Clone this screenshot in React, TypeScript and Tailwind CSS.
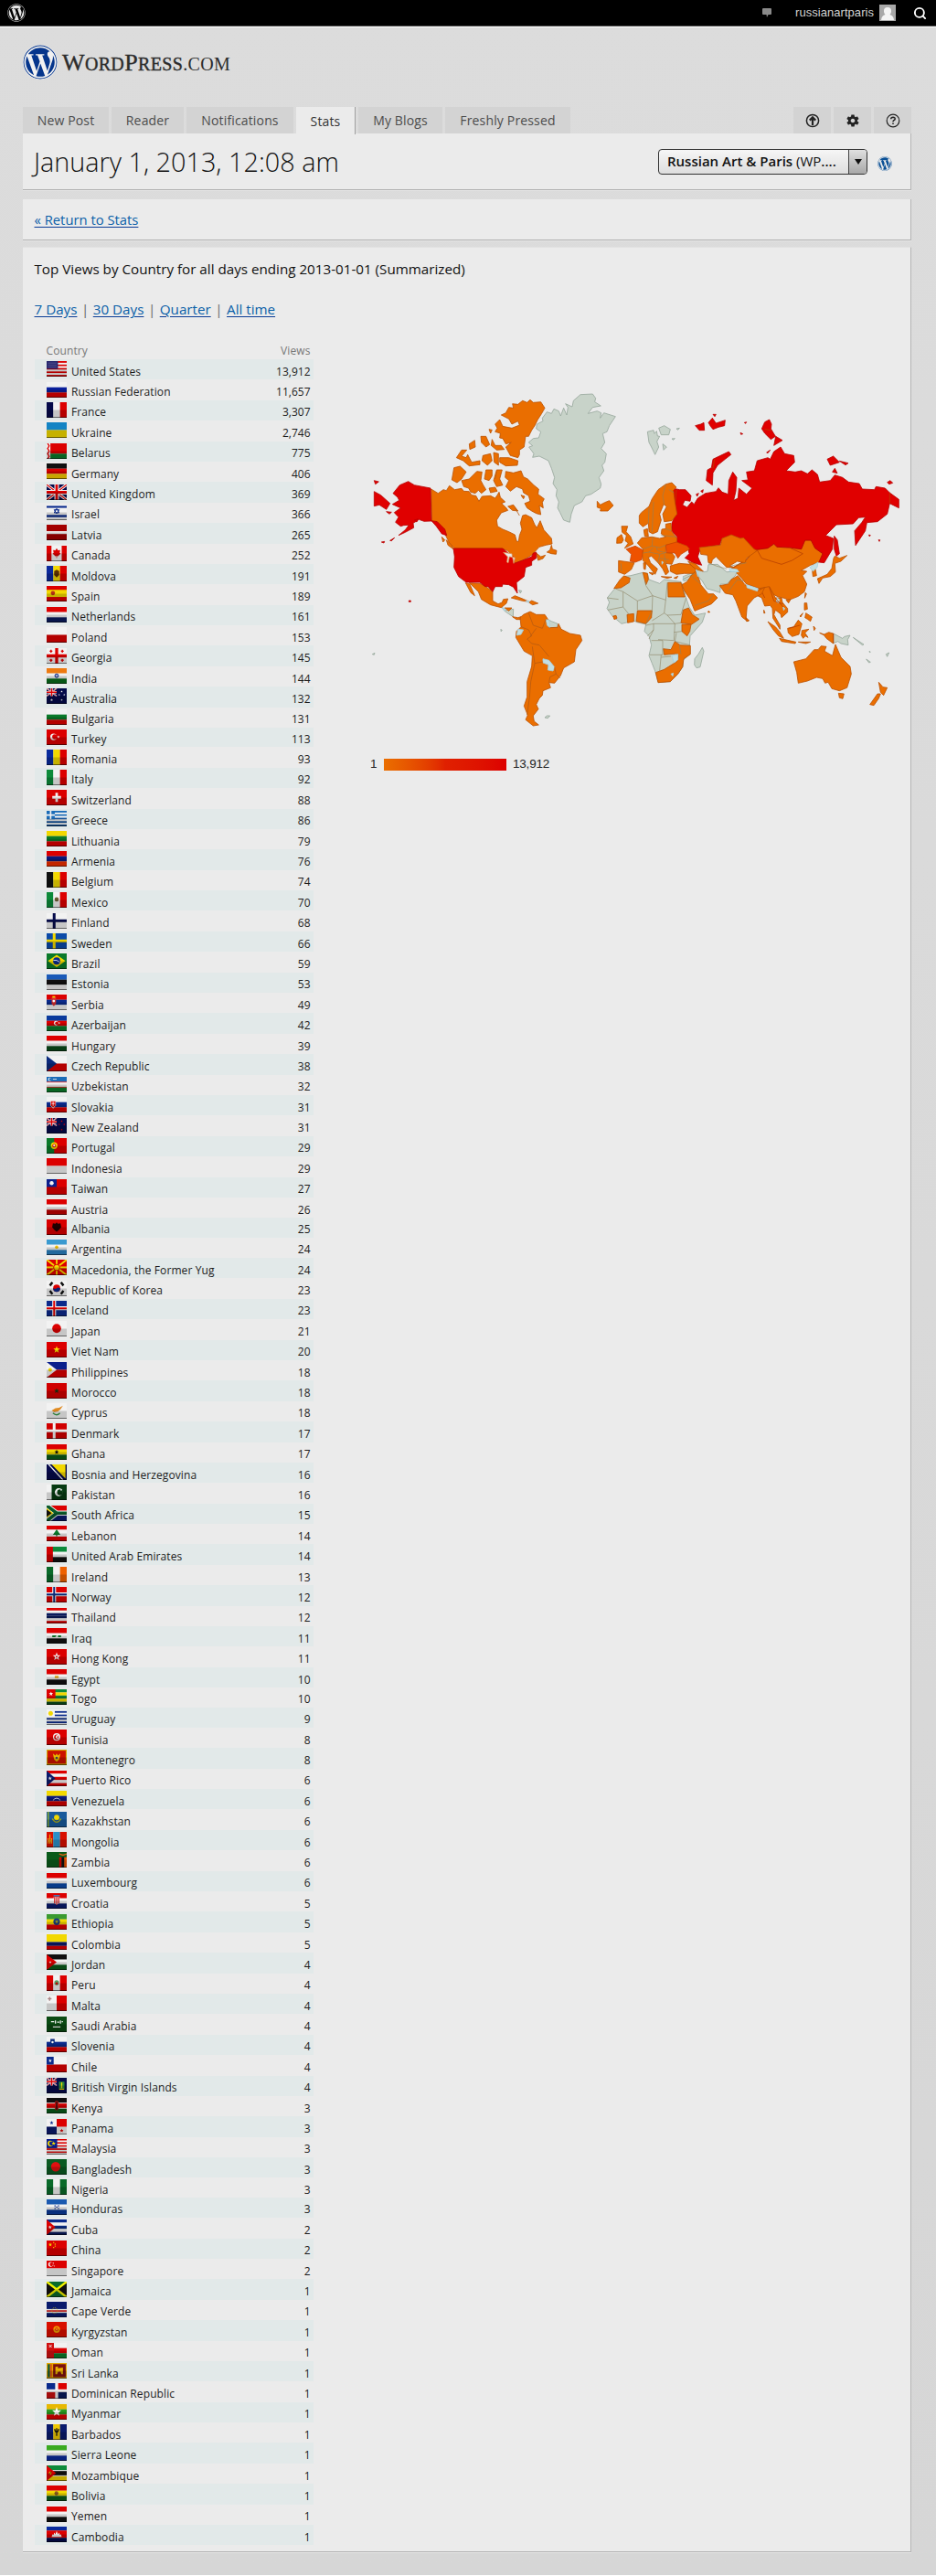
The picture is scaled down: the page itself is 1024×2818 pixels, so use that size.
import { ReactNode } from 'react';
import { FaWordpress } from 'react-icons/fa';
import { FiSearch } from 'react-icons/fi';
import { IoMdSettings } from 'react-icons/io';

/* ---------- flags (16 x 12 grid) ---------- */

const R = '#dc0000';
const W = '#f2f2f2';
const B = '#0a2a8c';
const N = '#050a4a';
const K = '#101010';
const G = '#0a7a2a';
const Y = '#f2d800';

const h = (...colors: string[]) =>
    colors.map((c, i) => (
        <rect key={`h${i}`} x="0" y={(12 / colors.length) * i} width="16" height={12 / colors.length + 0.05} fill={c} />
    ));
const v = (...colors: string[]) =>
    colors.map((c, i) => (
        <rect key={`v${i}`} x={(16 / colors.length) * i} y="0" width={16 / colors.length + 0.05} height="12" fill={c} />
    ));
const r = (x: number, y: number, w: number, ht: number, c: string) => <rect x={x} y={y} width={w} height={ht} fill={c} />;
const c = (x: number, y: number, rad: number, col: string) => <circle cx={x} cy={y} r={rad} fill={col} />;
const p = (points: string, col: string) => <polygon points={points} fill={col} />;
const l = (d: string, col: string, w = 1) => <path d={d} stroke={col} strokeWidth={w} fill="none" />;
const star = (x: number, y: number, rad: number, col: string) => {
    const pts = Array.from({ length: 10 }, (_, i) => {
        const a = (Math.PI / 5) * i - Math.PI / 2;
        const q = i % 2 ? rad * 0.42 : rad;
        return `${(x + Math.cos(a) * q).toFixed(2)},${(y + Math.sin(a) * q).toFixed(2)}`;
    });
    return <polygon points={pts.join(' ')} fill={col} />;
};
const crescent = (x: number, y: number, rad: number, col: string, bg: string) => (
    <>
        {c(x, y, rad, col)}
        {c(x + rad * 0.35, y, rad * 0.75, bg)}
    </>
);
const cross = (bg: string, outer: string, inner?: string) => (
    <>
        {h(bg)}
        {l('M6 0V12M0 5.8H16', outer, inner ? 3 : 2.2)}
        {inner && l('M6 0V12M0 5.8H16', inner, 1.4)}
    </>
);
const union = (
    <>
        {r(0, 0, 16, 12, N)}
        {l('M0 0L16 12M16 0L0 12', W, 2.2)}
        {l('M0 0L16 12M16 0L0 12', R, 0.8)}
        {l('M8 0V12M0 6H16', W, 3.6)}
        {l('M8 0V12M0 6H16', R, 2)}
    </>
);
const jack = <g transform="scale(.5)">{union}</g>;

type Row = [string, string, ReactNode];

const rows: Row[] = [
    ['United States', '13,912', <>{h(R, W, R, W, R, W, R, W, R)}{r(0, 0, 9, 6, '#24246c')}{l('M1 1.5H8M1 3H8M1 4.5H8', '#6666a0', 0.5)}</>],
    ['Russian Federation', '11,657', h(W, '#0a1f9c', R)],
    ['France', '3,307', v(N, W, R)],
    ['Ukraine', '2,746', h('#1483c4', Y)],
    ['Belarus', '775', <>{r(0, 0, 16, 8, R)}{r(0, 8, 16, 4, G)}{r(0, 0, 3, 12, W)}{l('M.8 0L2 2L.8 4L2 6L.8 8L2 10L.8 12', R)}</>],
    ['Germany', '406', h(K, R, '#f4c800')],
    ['United Kingdom', '369', union],
    ['Israel', '366', <>{h(W)}{r(0, 1, 16, 1.5, B)}{r(0, 8, 16, 1.7, B)}<path d="M8 3L10 6.3H6ZM8 7L6 4H10Z" fill="none" stroke={B} strokeWidth=".7" /></>],
    ['Latvia', '265', <>{h('#a30000')}{r(0, 5, 16, 2.2, W)}</>],
    ['Canada', '252', <>{v(R, W, W, R)}{p('8,2 9,3.6 10.8,3.4 10.4,5.6 11.3,6 9,8.2 8.2,8 8.2,9.5 7.8,9.5 7.8,8 7,8.2 4.7,6 5.6,5.6 5.2,3.4 7,3.6', R)}</>],
    ['Moldova', '191', <>{v('#0a2a9c', Y, R)}{p('8,3 10,4 10,7 8,9 6,7 6,4', '#5a3000')}</>],
    ['Spain', '189', <>{h(R)}{r(0, 3, 16, 5.5, Y)}{c(5, 5.5, 1.7, '#b83018')}</>],
    ['Netherlands', '161', h(R, W, '#0a1a5c')],
    ['Poland', '153', h(W, R)],
    ['Georgia', '145', <>{h(W)}{l('M8 0V12M0 6H16', R, 2.4)}{l('M2.4 2.4H4.6M3.5 1.3V3.5M11.4 2.4H13.6M12.5 1.3V3.5M2.4 9.4H4.6M3.5 8.3V10.5M11.4 9.4H13.6M12.5 8.3V10.5', R)}</>],
    ['India', '144', <>{h('#ee7a10', W, '#0a6a1a')}<circle cx="8" cy="5.8" r="1.4" fill="#aac" stroke={B} strokeWidth=".7" /></>],
    ['Australia', '132', <>{h(N)}{jack}{star(4, 9, 1.2, W)}{star(12, 2.5, 0.9, W)}{star(14, 5, 0.9, W)}{star(12, 9, 0.9, W)}{star(10, 5, 0.8, W)}</>],
    ['Bulgaria', '131', h(W, G, R)],
    ['Turkey', '113', <>{h(R)}{crescent(5.5, 5.7, 2.6, W, R)}{star(9.4, 5.7, 1.2, W)}</>],
    ['Romania', '93', v('#0a2a9c', Y, R)],
    ['Italy', '92', v('#0c8a3a', W, R)],
    ['Switzerland', '88', <>{h(R)}{l('M8 2.3V9.3M4.5 5.8H11.5', W, 2)}</>],
    ['Greece', '86', <>{h('#1a6cb8', W, '#1a6cb8', W, '#1a5ca8', W, '#0a4c98', W, '#0a4c98')}{r(0, 0, 6.5, 6.5, '#1a6cb8')}{l('M3.2 0V6.5M0 3.2H6.5', W, 1.2)}</>],
    ['Lithuania', '79', h(Y, G, R)],
    ['Armenia', '76', h(R, '#0a1a7c', '#ee3000')],
    ['Belgium', '74', v(K, Y, R)],
    ['Mexico', '70', <>{v('#0c8a3a', W, R)}{c(8, 5.6, 1.7, '#6a5a30')}</>],
    ['Finland', '68', cross(W, N)],
    ['Sweden', '66', cross('#0a4aa8', Y)],
    ['Brazil', '59', <>{h(G)}{p('8,1 15,5.8 8,10.6 1,5.8', Y)}{c(8, 5.8, 2.8, B)}{l('M5.4 5.3Q8 4.6 10.5 6.8', W, 0.6)}</>],
    ['Estonia', '53', h('#1a5ab8', K, W)],
    ['Serbia', '49', <>{h(R, B, W)}{p('4,2 7.5,2 7.5,7 5.7,9 4,7', '#d83030')}{c(5.7, 5, 1, W)}{r(4.6, 1.2, 2.2, 1.2, Y)}</>],
    ['Azerbaijan', '42', <>{h('#0a3a9c', R, G)}{crescent(7.5, 5.8, 1.7, W, R)}{star(10, 5.8, 0.9, W)}</>],
    ['Hungary', '39', h(R, W, '#0a4a1a')],
    ['Czech Republic', '38', <>{h(W, R)}{p('0,0 8,6 0,12', '#0a2a7c')}</>],
    ['Uzbekistan', '32', <>{h('#1a6cb8', W, G)}{l('M0 4H16M0 8H16', R, 0.5)}{crescent(2.5, 1.9, 1.3, W, '#1a6cb8')}{l('M5 1.8H8', W, 0.6)}</>],
    ['Slovakia', '31', <>{h(W, B, R)}{p('3,3 7.4,3 7.4,6.5 5.2,9 3,6.5', W)}{p('3.4,3.3 7,3.3 7,6.5 5.2,8.3 3.4,6.5', R)}{l('M5.2 3.8V7.2M4 5H6.4', W, 0.6)}</>],
    ['New Zealand', '31', <>{h(N)}{jack}{star(12, 2.5, 0.9, R)}{star(14, 5, 0.9, R)}{star(12, 9, 0.9, R)}{star(10, 5, 0.8, R)}</>],
    ['Portugal', '29', <>{h(R)}{r(0, 0, 6, 12, G)}{c(6, 5.8, 2.6, Y)}{c(6, 5.8, 1.4, R)}{c(6, 5.8, 0.8, W)}</>],
    ['Indonesia', '29', h(R, W)],
    ['Taiwan', '27', <>{h(R)}{r(0, 0, 8, 6, '#0a1f8c')}{c(4, 3, 1.6, W)}</>],
    ['Austria', '26', h(R, W, '#c00000')],
    ['Albania', '25', <>{h('#d80000')}{p('5,3 7,3.3 8,2.3 9,3.3 11,3 11.6,6 10,8 8,9.5 6,8 4.4,6', '#200')}</>],
    ['Argentina', '24', <>{h('#3a9ad0', W, '#2a80c0')}{c(8, 5.8, 1.3, '#f0c000')}</>],
    ['Macedonia, the Former Yug', '24', <>{h(R)}{l('M0 0L16 12M16 0L0 12M8 0V12M0 6H16', Y, 1.3)}{c(8, 6, 2.7, R)}{c(8, 6, 2, Y)}</>],
    ['Republic of Korea', '23', <>{h(W)}{c(8, 5.8, 2.8, R)}<path d="M5.2 5.8A2.8 2.8 0 0 0 10.8 5.8Q9 4.8 8 5.8T5.2 5.8" fill={B} />{l('M2.6 3.8L4.6 1.2M11.4 1.2L13.4 3.8M2.6 7.8L4.6 10.4M11.4 10.4L13.4 7.8', K, 1.8)}</>],
    ['Iceland', '23', cross('#0a2a8c', W, R)],
    ['Japan', '21', <>{h(W)}{c(8, 5.8, 3.5, R)}</>],
    ['Viet Nam', '20', <>{h(R)}{star(8, 6, 2.8, '#ffee00')}</>],
    ['Philippines', '18', <>{h('#0a1f8c', R)}{p('0,0 8,6 0,12', W)}{c(2.8, 6, 1.4, Y)}</>],
    ['Morocco', '18', <>{h('#d00000')}{star(8, 6, 2.2, '#1a3010')}</>],
    ['Cyprus', '18', <>{h(W)}{p('4,5.6 7,3.8 10,3.6 13,2 11,4.8 9,6.4 6,6.8', '#e08a20')}{l('M5 7.6Q8 10.4 10.6 7.6', '#3a9a4a', 0.9)}</>],
    ['Denmark', '17', cross('#d00000', W)],
    ['Ghana', '17', <>{h(R, Y, '#0a5a1a')}{star(8, 6, 1.9, K)}</>],
    ['Bosnia and Herzegovina', '16', <>{h(N)}{p('4,0 15,0 15,11', Y)}{l('M1.6 0L13 12', W, 0.9)}</>],
    ['Pakistan', '16', <>{h('#073a12')}{r(0, 0, 4, 12, W)}{crescent(9.6, 6, 3.1, W, '#073a12')}{star(11.6, 4, 1.1, W)}</>],
    ['South Africa', '15', <>{r(0, 0, 16, 6, R)}{r(0, 6, 16, 6, '#0a1a6c')}{l('M0 0L8 5.8H16M0 12L8 5.8', W, 4)}{l('M0 0L8 5.8H16M0 12L8 5.8', '#0a5a2a', 2.6)}{p('0,2 5.4,5.8 0,9.6', Y)}{p('0,3 4,5.8 0,8.6', K)}</>],
    ['Lebanon', '14', <>{h(W)}{r(0, 0, 16, 3, R)}{r(0, 8.4, 16, 3.6, R)}{p('8,2.8 11,7 8.5,7 8.5,8.2 7.5,8.2 7.5,7 5,7', G)}</>],
    ['United Arab Emirates', '14', <>{h('#0c8a3a', W, K)}{r(0, 0, 5, 12, '#d00000')}</>],
    ['Ireland', '13', v('#0a6a2a', W, '#ee6000')],
    ['Norway', '12', cross(R, W, '#0a2a7c')],
    ['Thailand', '12', <>{h(R, W, '#0a1a5c', '#0a1a5c', W, R)}</>],
    ['Iraq', '11', <>{h(R, W, K)}{l('M4.5 6.4H7M7 5.6V6.6M9 6.4H11.5', G, 1.4)}</>],
    ['Hong Kong', '11', <>{h(R)}{star(8, 5.8, 3.3, W)}{c(8, 5.8, 0.7, R)}</>],
    ['Egypt', '10', <>{h(R, W, K)}{r(6.5, 5, 3, 2, '#e8b030')}</>],
    ['Togo', '10', <>{h('#0c8a3a', Y, '#0c7a3a', Y, '#0a4a1a')}{r(0, 0, 7, 7, R)}{star(3.5, 3.5, 1.8, W)}</>],
    ['Uruguay', '9', <>{h(W, B, W, B, W, B, W, B, W)}{r(0, 0, 6.5, 6, W)}{c(3.2, 3, 1.8, Y)}</>],
    ['Tunisia', '8', <>{h(R)}{c(8, 5.8, 2.9, W)}{crescent(8, 5.8, 2, R, W)}{star(9, 5.8, 1, R)}</>],
    ['Montenegro', '8', <>{h('#d8a800')}{r(0.8, 0.8, 14.4, 10, '#cc1000')}{p('5,3 7,4.5 8,3 9,4.5 11,3 10,7.5 8,9.3 6,7.5', '#e8b800')}{c(8, 6.4, 0.9, '#446')}</>],
    ['Puerto Rico', '6', <>{h(R, W, R, W, R)}{p('0,0 7,6 0,12', '#0a1a6c')}{star(2.7, 6, 1.6, W)}</>],
    ['Venezuela', '6', <>{h(Y, '#0a1a7c', '#d00000')}{l('M5 7.4Q8 4 11 7.4', W, 0.6)}</>],
    ['Kazakhstan', '6', <>{h('#1a5a9c')}{r(0.8, 0, 1, 12, '#9ab020')}{c(8, 4.4, 2.1, Y)}{l('M4.5 5.4Q8 10.5 11.5 5.4', '#b0b020', 0.9)}</>],
    ['Mongolia', '6', <>{v('#d81000', '#2a90c8', '#d81000')}{l('M2.6 2V9M1.2 5V9M4 5V9M1.2 7H4', '#f0a010', 0.9)}</>],
    ['Zambia', '6', <>{h('#0a5a1a')}{r(10, 4, 2, 8, R)}{r(12, 4, 2, 8, K)}{r(14, 4, 2, 8, '#ee5000')}{l('M10 1.5L13 2.4L16 1.5', '#e06010', 1)}</>],
    ['Luxembourg', '6', h(R, W, '#0a4aa8')],
    ['Croatia', '5', <>{h(R, W, '#0a1a6c')}{p('5.6,3 10.4,3 10.4,7 8,9 5.6,7', W)}{l('M6.4 3V8M8 3V9M9.6 3V8', R, 0.8)}{l('M5.5 2H10.5', '#3a80c0', 1)}</>],
    ['Ethiopia', '5', <>{h('#3a9a30', Y, R)}{c(8, 5.8, 2.6, '#1a3a7c')}{star(8, 5.8, 1.6, '#a0a020')}</>],
    ['Colombia', '5', <>{r(0, 0, 16, 6, Y)}{r(0, 6, 16, 3, '#0a1a6c')}{r(0, 9, 16, 3, R)}</>],
    ['Jordan', '4', <>{h(K, W, '#0a5a1a')}{p('0,0 8,6 0,12', R)}{star(2.9, 6, 1.1, W)}</>],
    ['Peru', '4', <>{v(R, W, R)}{c(8, 5.6, 1.9, '#5a9a60')}{c(8, 6.2, 0.9, R)}</>],
    ['Malta', '4', <>{v(W, R)}{l('M2.4 1V4M.9 2.5H3.9', '#a88', 1)}</>],
    ['Saudi Arabia', '4', <>{h('#0a4a12')}{l('M3.5 4H6M7 3V5.4M8.4 4.4H10M11 3V5.4M12 4H13M5 8H11', W, 0.9)}</>],
    ['Slovenia', '4', <>{h(W, B, R)}{p('3,1.8 6.4,1.8 6.4,5 4.7,6.8 3,5', '#0a2a7c')}{c(4.7, 4.3, 0.9, W)}</>],
    ['Chile', '4', <>{h(W, R)}{r(0, 0, 5.6, 6, '#0a2a8c')}{star(2.8, 3, 1.5, W)}</>],
    ['British Virgin Islands', '4', <>{h(N)}{jack}{r(9.8, 3, 4.4, 5.4, '#2a8a3a')}{l('M12 3.6V8', Y, 0.9)}{l('M10 8.8H14', Y, 0.8)}</>],
    ['Kenya', '3', <>{h(K, '#d00000', '#0a5a1a')}{l('M0 4H16M0 8H16', W, 0.6)}<ellipse cx="8" cy="5.8" rx="1.7" ry="3.7" fill="#c01010" />{l('M8 2.4V9.2', K, 0.9)}</>],
    ['Panama', '3', <>{h(W)}{r(8, 0, 8, 6, R)}{r(0, 6, 8, 6, '#0a1a6c')}{star(4, 3, 1.6, B)}{star(12, 9, 1.6, R)}</>],
    ['Malaysia', '3', <>{h(R, W, R, W, R, W, R, W, R, W)}{r(0, 0, 8.4, 7, '#0a1f8c')}{crescent(3, 3.4, 2.2, Y, '#0a1f8c')}{star(5.6, 3.4, 1.7, Y)}</>],
    ['Bangladesh', '3', <>{h('#0a5a22')}{c(7.2, 5.8, 3.7, '#e01010')}</>],
    ['Nigeria', '3', v('#0a6a2a', W, '#0a6a2a')],
    ['Honduras', '3', <>{h('#1a5ab0', W, '#0a3a98')}{l('M6.2 5H7.2M9 5H10M7.6 6H8.6M6.2 7H7.2M9 7H10', B, 0.9)}</>],
    ['Cuba', '2', <>{h('#0a2a8c', W, '#0a2a7c', W, '#0a1a5c')}{p('0,0 7,6 0,12', R)}{star(2.7, 6, 1.5, W)}</>],
    ['China', '2', <>{h(R)}{star(2.9, 3.2, 1.6, Y)}{c(5.6, 1.5, 0.5, Y)}{c(6.8, 2.8, 0.5, Y)}{c(6.8, 4.3, 0.5, Y)}{c(5.6, 5.4, 0.5, Y)}</>],
    ['Singapore', '2', <>{h(R, W)}{crescent(3.2, 2.9, 1.9, W, R)}{l('M5 2H5.8M4.8 3.6H5.4M5.8 4.2H6.4', W, 0.7)}</>],
    ['Jamaica', '1', <>{h('#0a6a2a')}{p('0,0 8,6 0,12', K)}{p('16,0 8,6 16,12', K)}{l('M0 0L16 12M16 0L0 12', '#f0f000', 1.7)}</>],
    ['Cape Verde', '1', <>{h('#0a1a6c')}{r(0, 5.6, 16, 3, W)}{r(0, 6.6, 16, 1, R)}<circle cx="6.4" cy="6.8" r="2.2" fill="none" stroke={Y} strokeWidth=".6" strokeDasharray=".6 .9" /></>],
    ['Kyrgyzstan', '1', <>{h('#d81000')}{c(8, 5.8, 2.6, '#f0a000')}{c(8, 5.8, 1.5, '#d83010')}{l('M7 5L9 6.8M9 5L7 6.8', Y, 0.5)}</>],
    ['Oman', '1', <>{h(W, R, G)}{r(0, 0, 5.8, 12, '#d01010')}{l('M2 1.5L4 3.5M4 1.5L2 3.5', W, 0.7)}</>],
    ['Sri Lanka', '1', <>{h('#e8a800')}{r(0.9, 0.9, 1.8, 10, '#0a5a3a')}{r(2.7, 0.9, 1.7, 10, '#e06010')}{r(5.2, 0.9, 10, 10, '#7c1010')}{p('7,3 9,2.6 9,4 13,3.6 13,8.6 11.8,8.6 11,6.6 9,6.8 8.4,8.6 7,8.6', '#e8b000')}</>],
    ['Dominican Republic', '1', <>{h(W)}{r(0, 0, 6.8, 4.8, '#0a2a8c')}{r(9.2, 0, 6.8, 4.8, R)}{r(0, 7, 6.8, 5, '#c81010')}{r(9.2, 7, 6.8, 5, '#0a1a5c')}</>],
    ['Myanmar', '1', <>{h('#e8b800', '#2a9a20', R)}{star(8, 6, 3.8, '#fff')}</>],
    ['Barbados', '1', <>{v('#0a1a6c', '#f0c800', '#0a1a6c')}{l('M6.4 3.6Q6.6 6 8 6Q9.4 6 9.6 3.6M8 3V9', K, 0.9)}</>],
    ['Sierra Leone', '1', h('#3aaa20', W, '#0a2a9c')],
    ['Mozambique', '1', <>{h('#0c8a3a', K, '#f0d000')}{l('M0 4H16M0 8H16', W, 0.7)}{p('0,0 7.5,6 0,12', R)}{star(2.8, 6, 1.6, Y)}{l('M1.8 7L4 5', K, 0.6)}</>],
    ['Bolivia', '1', <>{h(R, Y, '#0a5a1a')}{c(7.8, 6, 1.6, '#8a5a20')}</>],
    ['Yemen', '1', h(R, W, K)],
    ['Cambodia', '1', <>{r(0, 0, 16, 3, '#0a2a9c')}{r(0, 3, 16, 5.6, R)}{r(0, 8.6, 16, 3.4, N)}{p('4,8 4.6,6 5.6,6.4 6,4.6 7,6 8,3.4 9,6 10,4.6 10.4,6.4 11.4,6 12,8', W)}</>],
];

const shortRows = ['Turkey', 'Albania', 'Togo', 'Nigeria'];

function Flag({ children }: { children: ReactNode }) {
    return (
        <svg viewBox="0 0 16 12" preserveAspectRatio="none" className="h-[17px] w-[22px] shrink-0">
            {children}
            <rect y="6" width="16" height="6" fill="#000" opacity=".18" />
            <rect y="11.3" width="16" height=".7" fill="#000" opacity=".5" />
        </svg>
    );
}

/* ---------- world map ---------- */

type Shape = { t: 'g' | 'o' | 'r' | 'f' | 'b' | 'w'; d: string[] };

const fills = {
    g: ['#c8d3c9', '#95a69b'],
    o: ['#ea6e00', '#bb5000'],
    r: ['#e00000', '#b80000'],
    f: ['#ee5200', '#c84400'],
    b: ['#c4dfe2', '#a5cfe0'],
    w: ['#ebebeb', '#e09050'],
};

const americas: Shape[] = [
    {
        t: 'g',
        d: [
            '565,225 580,212 598,210 605,190 590,180 592,165 612,155 610,145 625,125 640,130 648,115 664,122 670,138 680,112 690,135 694,110 686,98 708,108 712,88 735,68 775,66 785,80 782,92 802,105 775,110 760,130 790,122 803,128 800,145 812,128 850,140 830,170 822,190 808,196 815,225 803,245 820,262 815,290 806,300 812,318 796,340 803,362 800,375 770,395 752,400 740,420 715,432 705,460 700,487 680,480 668,455 660,440 664,420 655,400 658,380 645,360 650,340 640,310 630,285 600,270 578,274 582,262 566,240 578,236',
            '475,764 492,776 515,772 514,797 500,788 486,778',
            '622,803 640,812 660,820 660,832 630,833',
            '618,1128 625,1122 635,1122 628,1130',
            '52,920 60,916 58,922', '474,838 478,842 474,845', '533,710 542,712 538,720',
        ],
    },
    {
        t: 'o',
        d: [
            '245,378 268,392 285,380 295,383 305,367 322,380 345,376 352,385 370,386 378,398 392,400 402,418 412,402 440,400 455,408 462,398 468,388 472,405 488,420 476,425 490,438 497,448 475,456 460,480 463,500 480,510 500,518 520,528 526,550 532,550 535,530 543,510 538,490 545,465 555,462 575,472 585,495 592,505 603,482 615,512 640,540 642,558 622,562 600,568 575,595 545,612 518,622 515,600 495,580 475,573 322,573 305,555 290,525 270,500 247,482',
            '590,588 605,600 620,595 612,606 596,612', '640,562 643,575 657,580 655,592 640,590 625,585 635,578',
            '490,320 515,325 540,318 548,338 562,345 582,365 598,378 596,395 616,410 610,422 613,440 600,432 605,462 590,458 575,450 560,440 552,425 570,418 565,400 548,390 545,378 525,370 505,385 490,370 500,350 488,340',
            '345,350 370,345 395,320 412,322 408,350 416,365 425,380 410,392 400,382 390,392 375,388 368,375 352,370',
            '320,308 340,303 360,322 345,345 330,357 313,348',
            '425,315 445,315 445,335 435,350 420,345', '460,315 478,315 470,345 480,365 460,370 450,350',
            '435,375 455,372 462,385 440,390',
            '475,135 490,128 500,110 515,112 512,98 530,100 545,88 560,94 570,85 580,94 605,92 618,112 608,130 595,150 585,170 575,185 565,205 555,205 550,240 535,250 535,265 530,275 505,268 490,240 508,225 490,230 480,212 470,210 472,195 455,190 462,178 455,165 470,150 480,172 510,178 535,168 530,155 510,165 500,148',
            '470,275 500,275 530,285 528,300 490,302 470,290', '408,205 425,205 437,232 425,240 410,225',
            '328,275 345,250 362,250 345,270 360,275 365,265 378,290 405,285 405,298 370,302 350,285', '370,230 388,218 390,240 372,248',
            '415,268 440,262 445,285 430,300 412,285', '450,258 466,262 466,300 452,290', '435,182 445,184 440,195', '445,215 455,235 475,235 485,248 460,250 442,235',
            '497,435 515,430 530,450 512,448', '540,398 552,402 548,410', '280,535 290,545 284,552', '295,545 312,562 318,575 300,562',
            '370,686 405,688 425,698 447,715 447,745 465,755 478,750 482,740 497,738 492,753 475,767 440,758 410,740 400,715 375,690',
            '358,686 372,690 388,728 375,718', '486,768 510,768 500,778', '512,797 530,800 540,797 538,806 525,806',
            '508,735 520,728 540,736 568,748 545,745', '566,750 575,744 596,753 578,758',
            '548,790 570,780 590,790 618,790 628,805 632,833 660,832 663,820 672,838 700,852 735,858 740,875 720,905 715,945 680,965 670,990 650,1015 632,1013 637,1030 612,1040 610,1055 600,1065 590,1085 597,1100 580,1122 583,1140 598,1152 580,1155 555,1135 562,1120 550,1090 560,1060 560,1010 575,960 577,925 550,910 523,865 525,845 540,830 537,800',
            '790,418 800,430 815,422 830,416 843,432 825,450 800,450 802,442 790,438',
        ],
    },
    {
        t: 'r',
        d: [
            '120,392 142,365 170,353 190,365 243,375 246,483 222,484 205,478 186,490 188,505 160,520 138,530 160,512 172,496 155,497 145,500 128,487 138,470 124,455 145,440 118,428 140,415 135,405',
            '58,386 80,398 110,425 98,445 75,430 58,434', '58,350 73,354 62,362', '246,482 265,485 290,510 296,530 280,525 262,500',
            '110,547 125,538 115,548', '82,552 92,550 90,555', '98,452 115,454 108,460', '172,744 178,744 178,748 172,748', '190,480 202,476 198,486',
            '318,573 480,573 500,590 515,600 518,622 545,612 575,600 580,588 590,585 590,605 575,615 575,628 555,635 550,665 525,685 528,720 515,700 500,692 480,690 478,698 455,698 447,715 432,698 422,698 405,684 360,684 335,665 320,635 322,600',
        ],
    },
    { t: 'w', d: ['482,586 510,590 512,602 502,600 498,620 494,618 496,600', '512,600 520,604 516,622'] },
    { t: 'b', d: ['612,935 632,940 650,962 645,975 628,972 630,955 612,948', '530,838 548,840 540,855 526,858', '477,768 490,772 486,778', '556,745 566,745 566,752', '622,806 632,808 634,832 626,826'] },
];

const europeAfrica: Shape[] = [
    {
        t: 'g',
        d: [
            '35,378 48,365 65,335 90,332 130,322 145,325 150,345 185,358 200,345 255,352 262,365 270,400 282,435 300,462 335,455 325,485 285,530 283,560 285,590 262,610 262,630 245,655 220,680 180,683 170,645 160,620 150,595 158,560 150,530 135,515 140,492 110,485 100,480 60,490 30,465 12,440 20,420 13,405',
            '300,605 312,590 325,568 330,580 318,632 306,635 299,625',
            '307,308 330,320 342,318 345,296 375,295 405,320 438,318 435,330 405,360 385,360 383,388 360,380 340,375 325,350 312,335',
            '262,335 295,322 282,345 264,350',
        ],
    },
    {
        t: 'o',
        d: [
            '118,135 125,125 150,105 160,80 180,50 205,32 225,27 240,42 230,52 235,90 242,130 225,152 200,155 195,130 208,105 198,98 185,130 190,150 178,188 162,195 150,188 148,160 130,172 118,160',
            '133,182 145,178 148,203 136,203', '60,170 80,170 75,188 90,205 98,228 70,242 82,225 72,218 76,200 62,190', '45,208 60,197 66,215 60,225 44,226',
            '50,283 102,290 92,312 70,328 50,320',
            '112,225 126,208 160,205 185,210 205,205 190,195 192,180 205,178 205,163 222,160 225,188 242,210 240,225 205,232 205,257 225,258 235,270 225,295 205,292 215,320 205,330 195,310 180,290 158,268 148,272 155,290 178,310 170,328 148,300 130,282 128,262 130,245',
            '132,290 140,290 138,312 133,310', '150,322 166,324 162,330', '232,340 245,334 240,342', '190,335 225,337 210,341',
            '220,300 250,292 285,295 305,312 300,325 265,325 240,328 220,318', '278,285 305,295 328,318 305,312 290,300',
            '315,240 385,232 390,210 420,198 450,210 460,208 495,245 505,250 470,275 465,290 440,285 415,300 430,305 405,305 370,270 358,280 355,292 345,290 342,265 320,262',
            '258,362 275,352 290,330 303,318 315,345 320,362 345,392 362,392 375,405 355,425 300,448 285,410 265,380',
            '382,365 410,360 420,345 442,332 452,345 465,362 508,382 530,370 520,392 495,405 472,432 468,478 455,468 435,415 425,395 400,390',
            '345,448 350,452 344,453', '468,470 478,480 470,482',
            '35,374 55,345 68,333 88,340 85,355 58,372', '130,322 145,325 148,345 140,362', '212,355 255,355 268,402 213,402',
            '112,447 160,447 158,470 140,490 108,482', '78,460 100,457 100,483 80,487', '32,465 42,463 45,472 36,476',
            '262,445 280,438 292,460 315,475 290,492 255,487', '258,492 288,492 284,515 275,530 258,515',
            '197,572 222,575 235,548 252,560 286,562 286,590 264,605 260,632 245,655 220,680 180,683 172,650 200,640 240,615 247,595 240,588 200,592',
        ],
    },
    { t: 'f', d: ['75,245 105,235 130,248 126,280 105,288 88,285 92,262', '205,232 240,222 275,235 283,245 255,262 245,275 235,258 208,257'] },
    { t: 'b', d: ['470,362 508,375 506,383 472,372', '415,308 440,312 445,320 415,318', '192,285 197,288 193,295', '222,655 230,652 228,662', '225,595 245,590 245,608 232,618', '305,312 312,322 310,335', '262,338 268,345 262,350'] },
];

const asiaPacific: Shape[] = [
    {
        t: 'g',
        d: [
            '25,190 45,185 48,196 55,188 58,204 65,205 56,222 62,240 50,265 38,240 30,225', '62,178 80,170 100,182 95,200 70,200', '75,230 88,240 78,250', '120,180 130,178 125,184', '105,213 115,212 110,217',
            '635,852 665,868 672,862 690,858 682,872 684,890 660,885 650,878 635,884', '700,865 735,888 730,890', '743,936 757,946 752,948', '808,920 818,915 812,928', '753,910 757,913 754,914',
        ],
    },
    {
        t: 'o',
        d: [
            '375,578 395,575 420,572 440,558 450,568 490,570 530,575 542,546 562,546 575,572 600,590 588,618 560,628 530,645 548,648 534,662 548,690 540,715 520,730 490,742 470,735 455,732 440,725 425,700 395,705 350,690 325,660 298,640 350,610',
            '566,645 576,640 580,662 568,665', '636,605 640,598 655,605 680,596 660,615 640,622 642,650 625,665 600,670 588,688 583,672 615,658 630,638',
            '388,705 425,698 445,735 465,735 468,750 485,770 485,782 465,800 462,788 445,775 440,790 460,825 460,838 437,802 435,770 428,760 410,762 400,735 386,728',
            '420,813 445,830 458,845 472,868 455,860 438,840', '458,868 512,880 510,885 465,878', '520,880 560,880 545,885', '485,835 505,830 520,808 532,820 522,855 500,862 487,850',
            '532,842 555,838 542,850 552,865 543,860 536,868 530,858', '590,850 605,855 620,848 635,852 635,885 612,868 605,858', '570,828 576,835 572,842',
            '540,752 548,752 550,772 540,775', '545,785 565,798 560,812 550,805 542,800', '525,795 535,785 528,798', '543,718 547,722 541,736', '480,742 495,740 488,752',
            '505,945 545,935 572,905 585,905 595,893 612,895 606,910 632,925 642,888 660,930 690,960 694,985 680,1030 655,1040 630,1033 618,1012 608,1015 600,1000 580,996 550,1008 520,1015 515,980',
            '652,1048 670,1050 666,1066 655,1063', '784,1012 798,1028 812,1030 800,1055 790,1045', '780,1050 790,1050 784,1065 768,1088 755,1085', '348,800 358,810 352,812', '407,775 411,785 407,785',
        ],
    },
    {
        t: 'r',
        d: [
            '107,375 130,380 150,380 168,400 165,418 148,415 140,430 155,438 170,420 178,428 190,408 215,392 250,386 258,374 270,388 290,395 292,350 305,322 318,340 315,385 308,415 322,408 325,375 350,395 368,375 335,350 355,348 350,322 376,318 385,285 420,275 428,280 440,255 462,240 475,262 505,268 508,290 480,318 510,322 530,318 550,328 565,315 583,330 590,355 625,350 640,332 665,340 685,355 720,360 730,378 770,380 775,370 805,375 820,390 850,412 850,440 820,425 812,460 780,485 745,488 740,515 708,563 705,515 728,488 740,470 718,472 700,492 645,495 610,530 635,540 632,575 605,620 588,618 600,590 575,572 562,546 542,546 530,575 490,570 450,568 440,558 420,572 375,578 345,560 330,540 300,530 270,540 262,562 200,570 190,600 203,628 175,620 148,604 162,590 158,572 122,556 122,535 105,515 105,490 118,460 112,420',
            '218,350 222,315 235,308 240,280 265,268 292,255 299,265 280,280 255,300 240,325 238,365',
            '400,180 410,158 425,150 432,165 430,180 445,205 430,215 410,195', '440,235 446,205 468,218', '182,170 200,165 210,160 212,185 195,185', '225,160 238,145 250,162 280,152 278,170 258,175 240,182 232,172',
            '615,280 635,270 655,290 625,300', '655,286 684,293 675,299', '632,322 640,310 648,326', '812,356 822,350 830,358 818,362', '638,532 648,545 655,590 645,598 638,575',
            '343,160 350,158 347,163', '330,193 338,197 332,199', '783,545 788,545 786,550', '752,528 757,530 753,533', '200,385 208,380 206,390', '416,258 428,250 420,260', '240,133 250,133 246,140', '185,395 193,392 188,402',
        ],
    },
    { t: 'b', d: ['558,635 585,618 582,635 568,648', '450,735 458,740 456,752 448,748', '470,765 476,770 472,776'] },
];

const borders = {
    americas:
        'M565,785L580,825 610,835 622,805M570,862L590,835M540,830L565,840 575,860 560,870 575,885 600,890 632,928M577,895L585,950 572,1010 568,1060 560,1120M585,950L612,945M650,962L655,985 635,995 632,1013M655,985L668,998M460,320L455,345M535,465L520,440',
    europeAfrica:
        'M150,110L148,160M165,90L160,190M205,32L195,70 200,98M215,50L232,60M162,205L160,235 130,245M160,235L185,240 205,232M165,240L150,255 130,258M175,240L178,250 205,257M150,255L185,262 205,257M185,262L180,290M200,262L205,292M185,275L215,280M205,178L222,185M190,200L240,205M58,292L60,318M345,290L370,300 405,310M420,300L470,290M300,325L260,345M290,335L318,358M300,430L345,415 360,395M410,385L440,345 460,350M13,405L50,410M15,445L65,435 65,385 40,375M65,385L112,415 162,398 140,365 138,350M65,435L85,460M112,415L112,445M162,398L160,447 140,490M162,398L205,412 210,355M205,412L200,455 160,480M200,455L210,462 255,460 272,405M210,462L235,490 255,487M165,490L235,490 232,545 180,542M140,495L165,490 165,510 145,530M165,510L150,540M158,545L195,545 195,592 152,592M190,592L185,645M190,600L222,597M232,518L258,515M240,520L235,548 285,560M250,560L255,590',
    asiaPacific: 'M385,578L400,605 465,625 500,612 535,590 490,570M375,578L350,610 300,640M425,700L440,745 470,755M445,735L470,765M395,705L410,735M490,835L525,825M820,390L820,425M635,852L635,884M120,380L112,470M245,280L240,310M410,182L430,185',
};

function Shapes({ shapes }: { shapes: Shape[] }) {
    return (
        <>
            {shapes.map((s, i) => (
                <g key={i} fill={fills[s.t][0]} stroke={fills[s.t][1]} strokeWidth="2.4" strokeLinejoin="round">
                    {s.d.map((pts) => (
                        <polygon key={pts} points={pts} />
                    ))}
                </g>
            ))}
        </>
    );
}

function WorldMap() {
    return (
        <svg viewBox="0 0 1800 1200" className="block h-[400px] w-[600px]">
            <Shapes shapes={americas} />
            <path d={borders.americas} fill="none" stroke="#b85a10" strokeWidth="2.4" />
            <g transform="translate(930 0)">
                <Shapes shapes={asiaPacific} />
                <path d={borders.asiaPacific} fill="none" stroke="#b84000" strokeWidth="2.4" />
            </g>
            <g transform="translate(810 330)">
                <Shapes shapes={europeAfrica} />
                <path d={borders.europeAfrica} fill="none" stroke="#8a8060" strokeOpacity=".8" strokeWidth="2.2" />
            </g>
        </svg>
    );
}

/* ---------- page ---------- */

const tabs = [
    { label: 'New Post', width: 'w-[94px]' },
    { label: 'Reader', width: 'w-[79px]' },
    { label: 'Notifications', width: 'w-[117px]' },
    { label: 'Stats', width: 'w-[65px]' },
    { label: 'My Blogs', width: 'w-[92px]' },
    { label: 'Freshly Pressed', width: 'w-[137px]' },
];

const card = 'bg-[#ebebeb] border-r border-b border-r-[#b5b5b5] border-b-[#b0b0b0] shadow-[0_1px_0_#e6e6e6]';
const link = 'text-[#0a5fa8] underline decoration-[#0a3c96] underline-offset-2';

function AdminBar() {
    return (
        <div className="flex h-[29px] items-center border-b border-[#555] bg-black pl-2 pr-[10px] font-['Liberation_Sans',Arial,sans-serif]">
            <FaWordpress className="h-5 w-5 text-[#e4e4e4]" />
            <svg viewBox="0 0 12 12" className="ml-auto h-3 w-3">
                <path d="M2 1H10Q11 1 11 2V7Q11 8 10 8H7.5L6 11L5.5 8H2Q1 8 1 7V2Q1 1 2 1" fill="#8a8a8a" />
            </svg>
            <span className="ml-[25px] w-[86px] whitespace-nowrap text-[13px] tracking-[0.05px] text-[#d2d2d2]">russianartparis</span>
            <svg viewBox="0 0 18 18" className="ml-[6px] h-[18px] w-[18px]">
                <rect width="18" height="18" fill="#a8a8a8" />
                <path d="M9 3Q13.5 3 13 8Q12.6 10 11.5 11Q15.5 12 16 17H2Q2.5 12 6.5 11Q5.4 10 5 8Q4.5 3 9 3" fill="#f4f4f4" />
            </svg>
            <FiSearch className="ml-[19px] h-[15px] w-[15px] text-white" strokeWidth={3} />
        </div>
    );
}

function TabIcon({ children }: { children: ReactNode }) {
    return <div className="flex h-[29px] w-[41px] items-center justify-center bg-[#d3d3d3] text-[#222]">{children}</div>;
}

export default function App() {
    return (
        <div className="h-[2818px] w-[1024px] overflow-hidden border-b border-white bg-gradient-to-b from-[#dcdcdc] to-[#d6d6d6] font-['Open_Sans','Noto_Sans',sans-serif] text-[#1c1c1c]">
            <AdminBar />
            <div className="h-px bg-white" />

            <div className="mr-[27px] ml-[25px]">
                <div className="mt-[19px] flex h-[38px] items-center">
                    <FaWordpress className="h-[38px] w-[38px] rounded-full bg-white/60 text-[#05358c]" />
                    <div className="mt-[2px] ml-[5px] flex items-baseline whitespace-nowrap font-['Liberation_Serif',serif] text-[20px] leading-none tracking-[0.35px] text-[#2c2c2c] [-webkit-text-stroke:0.4px_#2c2c2c]">
                        <span className="text-[26px]">W</span>ORD<span className="text-[26px]">P</span>RESS
                        <span className="[-webkit-text-stroke:0]">.COM</span>
                    </div>
                </div>

                <div className="mt-[30px] flex h-[29px] gap-[3px]">
                    {tabs.map((t) => (
                        <div
                            key={t.label}
                            className={`${t.width} flex items-center justify-center whitespace-nowrap text-[14px] tracking-[0.15px] ${
                                t.label === 'Stats'
                                    ? 'h-[30px] border-r border-[#a0a0a0] bg-[#ebebeb] text-[#333]'
                                    : 'h-[29px] bg-[#d3d3d3] text-[#4c4c4c]'
                            }`}
                        >
                            {t.label}
                        </div>
                    ))}
                    <div className="ml-auto flex gap-[3px]">
                        <TabIcon>
                            <svg viewBox="0 0 16 16" className="h-4 w-4" fill="none" stroke="currentColor">
                                <circle cx="8" cy="8" r="6.6" strokeWidth="1.5" />
                                <path d="M8 13V5M4.8 7.6L8 4.4L11.2 7.6" strokeWidth="2.2" />
                            </svg>
                        </TabIcon>
                        <TabIcon>
                            <IoMdSettings className="h-4 w-4" />
                        </TabIcon>
                        <TabIcon>
                            <svg viewBox="0 0 16 16" className="h-4 w-4" fill="none" stroke="currentColor">
                                <circle cx="8" cy="8" r="6.8" strokeWidth="1.2" />
                                <path d="M5.7 6.3Q5.8 4.2 8 4.2Q10.3 4.3 10.2 6.1Q10.1 7.2 8.7 7.8Q8 8.2 8 9.3M8 10.4V12" strokeWidth="1.5" />
                            </svg>
                        </TabIcon>
                    </div>
                </div>

                <div className={`${card} flex h-[62px] items-center pr-[20px] pl-[12px]`}>
                    <h1 className="whitespace-nowrap text-[28.8px] font-light text-[#111]">January 1, 2013, 12:08 am</h1>
                    <div className="ml-auto flex h-[28px] w-[229px] items-center rounded-[4px] border border-[#333] bg-gradient-to-b from-[#f6f6f6] to-[#dedede]">
                        <span className="flex-1 whitespace-nowrap pl-[9px] text-[15px] text-[#111]">
                            <b className="font-semibold">Russian Art &amp; Paris</b> (WP<b className="font-semibold">....</b>
                        </span>
                        <span className="flex h-full w-[20px] items-center justify-center rounded-r-[3px] border-l border-[#444] bg-gradient-to-b from-[#e0e0e0] to-[#a8a8a8]">
                            <svg viewBox="0 0 8 6" className="h-[6px] w-2">
                                <path d="M0 0H8L4 6Z" fill="#111" />
                            </svg>
                        </span>
                    </div>
                    <FaWordpress className="mt-[4px] ml-[11px] h-4 w-4 text-[#0a5096]" />
                </div>

                <div className={`${card} mt-[10px] flex h-[45px] items-center pl-[12.5px] text-[14.8px]`}>
                    <a className={link}>« Return to Stats</a>
                </div>

                <div className={`${card} mt-[7px] h-[2522px] border-t border-t-[#e2e2e2] pl-[12.5px] pt-[13px]`}>
                    <div className="whitespace-nowrap text-[15.2px] leading-[20px] text-[#111]">
                        Top Views by Country for all days ending 2013-01-01 (Summarized)
                    </div>
                    <div className="mt-[24px] flex gap-[4.5px] text-[15.2px] leading-[20px] text-[#666]">
                        <a className={link}>7 Days</a>|<a className={link}>30 Days</a>|<a className={link}>Quarter</a>|
                        <a className={link}>All time</a>
                    </div>

                    <div className="mt-[26px] flex items-start">
                        <div className="w-[305px] text-[12px] tracking-[0.1px]">
                            <div className="flex h-[19px] items-center justify-between pr-[3px] pl-[13px] text-[#777]">
                                <span>Country</span>
                                <span>Views</span>
                            </div>
                            {rows.map(([name, views, flag], i) => (
                                <div
                                    key={name}
                                    className={`flex items-center pr-[3px] pl-[13px] ${shortRows.includes(name) ? 'h-[21.3px]' : 'h-[22.4px]'} ${
                                        i % 2 === 0 ? 'bg-[#e2e9e9]' : ''
                                    }`}
                                >
                                    <div className="-mt-[1px] flex">
                                        <Flag>{flag}</Flag>
                                    </div>
                                    <span className="mt-[5px] ml-[5.5px] whitespace-nowrap">{name}</span>
                                    <span className="mt-[5px] ml-auto tracking-normal">{views}</span>
                                </div>
                            ))}
                        </div>

                        <div className="mt-[35px] ml-[47.5px]">
                            <WorldMap />
                            <div className="mt-[20px] ml-[15px] flex h-[14px] items-center font-['Liberation_Sans',Arial,sans-serif] text-[13.5px] text-[#222]">
                                <span className="w-[15px]">1</span>
                                <div className="h-[13px] w-[134px] bg-gradient-to-r from-[#ea6e00] via-[#e02000] via-50% to-[#dd0000]" />
                                <span className="ml-[7px] tracking-[-0.2px]">13,912</span>
                            </div>
                        </div>
                    </div>
                </div>
            </div>
        </div>
    );
}
